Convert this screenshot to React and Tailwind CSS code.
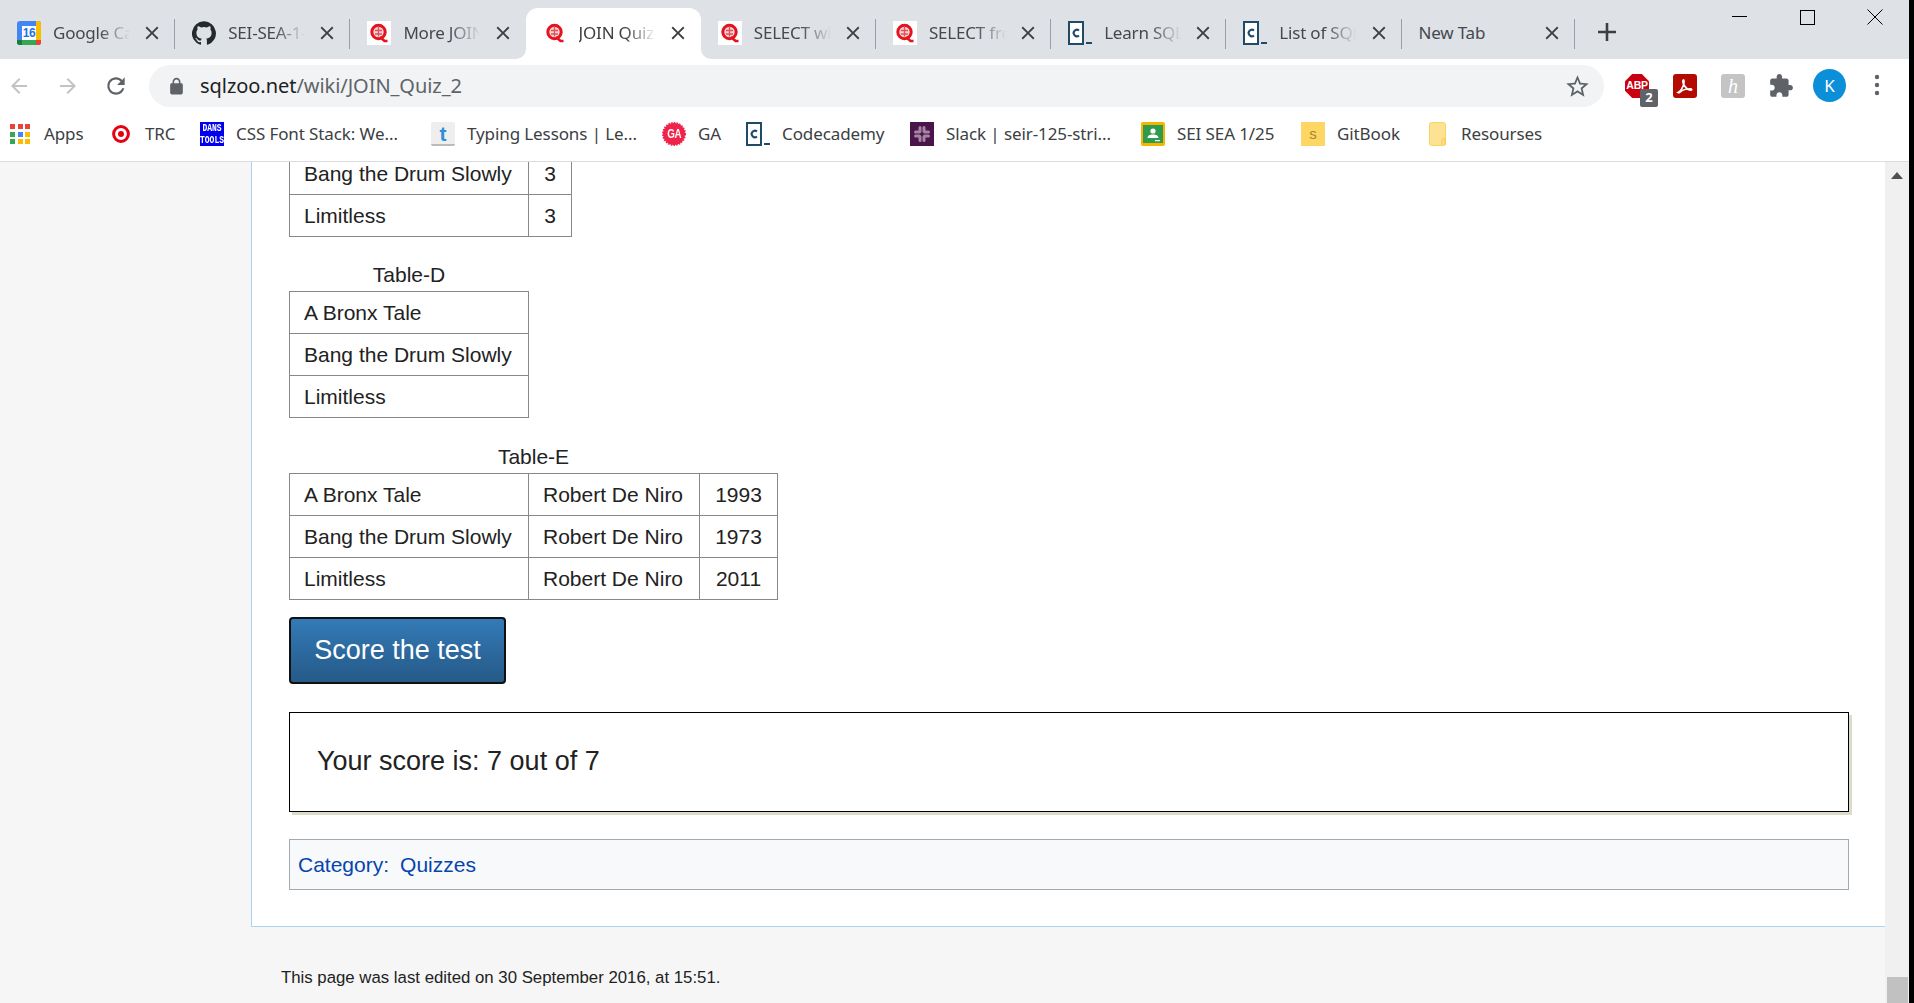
import React from "react";

const M = {
  close: "M19 6.41L17.59 5 12 10.59 6.41 5 5 6.41 10.59 12 5 17.59 6.41 19 12 13.41 17.59 19 19 17.59 13.41 12z",
  back: "M20 11H7.83l5.59-5.59L12 4l-8 8 8 8 1.41-1.41L7.83 13H20v-2z",
  forward: "M4 11h12.17l-5.59-5.59L12 4l8 8-8 8-1.41-1.41L16.17 13H4v-2z",
  reload: "M17.65 6.35C16.2 4.9 14.21 4 12 4c-4.42 0-7.99 3.58-7.99 8s3.57 8 7.99 8c3.73 0 6.84-2.55 7.73-6h-2.08c-.82 2.33-3.04 4-5.65 4-3.31 0-6-2.69-6-6s2.69-6 6-6c1.66 0 3.14.69 4.22 1.78L13 11h7V4l-2.35 2.35z",
  star: "M22 9.24l-7.19-.62L12 2 9.19 8.63 2 9.24l5.46 4.73L5.82 21 12 17.27 18.18 21l-1.63-7.03L22 9.24zM12 15.4l-3.76 2.27 1-4.28-3.32-2.88 4.38-.38L12 6.1l1.71 4.04 4.38.38-3.32 2.88 1 4.28L12 15.4z",
  lock: "M18 8h-1V6c0-2.76-2.24-5-5-5S7 3.24 7 6v2H6c-1.1 0-2 .9-2 2v10c0 1.1.9 2 2 2h12c1.1 0 2-.9 2-2V10c0-1.1-.9-2-2-2zM9 6c0-1.66 1.34-3 3-3s3 1.34 3 3v2H9V6z",
  puzzle: "M20.5 11H19V7c0-1.1-.9-2-2-2h-4V3.5C13 2.12 11.88 1 10.5 1S8 2.12 8 3.5V5H4c-1.1 0-1.99.9-1.99 2v3.8H3.5c1.49 0 2.7 1.21 2.7 2.7s-1.21 2.7-2.7 2.7H2V20c0 1.1.9 2 2 2h3.8v-1.5c0-1.49 1.21-2.7 2.7-2.7 1.49 0 2.7 1.21 2.7 2.7V22H17c1.1 0 2-.9 2-2v-4h1.5c1.38 0 2.5-1.12 2.5-2.5S21.88 11 20.5 11z",
  github: "M12 .3a12 12 0 0 0-3.8 23.4c.6.1.8-.3.8-.6v-2c-3.3.7-4-1.6-4-1.6-.5-1.4-1.3-1.8-1.3-1.8-1.1-.7.1-.7.1-.7 1.2.1 1.8 1.2 1.8 1.2 1.1 1.8 2.8 1.3 3.5 1 .1-.8.4-1.3.8-1.6-2.7-.3-5.5-1.3-5.5-5.9 0-1.3.5-2.4 1.2-3.2-.1-.3-.5-1.5.1-3.2 0 0 1-.3 3.3 1.2a11.5 11.5 0 0 1 6 0c2.3-1.5 3.3-1.2 3.3-1.2.7 1.7.2 2.9.1 3.2.8.8 1.2 1.9 1.2 3.2 0 4.6-2.8 5.6-5.5 5.9.4.4.8 1.1.8 2.2v3.3c0 .3.2.7.8.6A12 12 0 0 0 12 .3z",
};

const Mat = ({ d, size = 24, cls = "" }) => (
  <svg width={size} height={size} viewBox="0 0 24 24" className={cls} fill="currentColor">
    <path d={d} />
  </svg>
);

const GCal = () => (
  <div className="relative w-6 h-6 rounded-[3px] bg-[#4285f4] overflow-hidden shrink-0">
    <div className="absolute right-0 top-0 bottom-0 w-[5px] bg-[#fbbc04]" />
    <div className="absolute left-0 right-0 bottom-0 h-[5px] bg-[#34a853]" />
    <div className="absolute left-0 bottom-0 w-[5px] h-[5px] bg-[#188038]" />
    <div className="absolute right-0 bottom-0 w-[5px] h-[5px] bg-[#ea4335]" />
    <div className="absolute left-[5px] top-[5px] w-[14px] h-[14px] bg-white flex items-center justify-center text-[#1a73e8] text-[12px] font-bold tracking-[-0.5px] font-['Liberation_Sans',sans-serif]">16</div>
  </div>
);

const Zoo = ({ bg = true }) => (
  <div className={`w-6 h-6 flex items-center justify-center shrink-0 ${bg ? "bg-white" : ""}`}>
    <svg width="20" height="20" viewBox="0 0 20 20" fill="none">
      <circle cx="9.5" cy="9" r="6.7" fill="#f7d5d7" stroke="#e3131f" strokeWidth="3" />
      <path d="M9.5 3.5v10M6 7.5h7M6 11h7" stroke="#e2525a" strokeWidth="1.3" />
      <path d="M11 14l4.5 4h3" stroke="#e3131f" strokeWidth="2.6" />
    </svg>
  </div>
);

const Cc = () => (
  <svg width="24" height="24" viewBox="0 0 24 24" className="shrink-0">
    <rect x="1" y="1" width="14" height="22" fill="#fff" stroke="#204b66" strokeWidth="2" />
    <path d="M11 9.6a3.2 3.2 0 1 0 0 4.8" fill="none" stroke="#204b66" strokeWidth="2" />
    <rect x="18" y="21" width="6" height="2" fill="#204b66" />
  </svg>
);

const Ghub = () => <Mat d={M.github} size={24} cls="text-[#24292e] shrink-0" />;

const tabs = [
  { t: "Google Ca", i: <GCal />, sep: true },
  { t: "SEI-SEA-1-", i: <Ghub />, sep: true },
  { t: "More JOIN", i: <Zoo />, sep: false },
  { t: "JOIN Quiz", i: <Zoo bg={false} />, active: true, sep: false },
  { t: "SELECT wi", i: <Zoo />, sep: true },
  { t: "SELECT fro", i: <Zoo />, sep: true },
  { t: "Learn SQL", i: <Cc />, sep: true },
  { t: "List of SQL", i: <Cc />, sep: true },
  { t: "New Tab", i: null, sep: true },
];

const Tab = ({ tab }) => (
  <div className={`relative h-[51px] shrink-0 flex items-center pl-[17px] pb-[1px] ${tab.i ? "w-[175.2px]" : "w-[173px]"} ${tab.active ? "bg-white rounded-t-[12px]" : ""}`}>
    {tab.active && (
      <>
        <div className="absolute -left-[10px] bottom-0 w-[10px] h-[10px] bg-white">
          <div className="w-full h-full bg-[#dee1e6] rounded-br-[10px]" />
        </div>
        <div className="absolute -right-[10px] bottom-0 w-[10px] h-[10px] bg-white">
          <div className="w-full h-full bg-[#dee1e6] rounded-bl-[10px]" />
        </div>
      </>
    )}
    {tab.i}
    <div className={`overflow-hidden whitespace-nowrap text-[17px] tracking-[-0.2px] ${tab.i ? "ml-3 w-[84px] [mask-image:linear-gradient(to_right,black_55%,transparent_92%)]" : "ml-0 w-[104px]"} ${tab.active ? "text-[#3c4043]" : "text-[#45484d]"}`}>
      {tab.t}
    </div>
    <Mat d={M.close} size={22} cls="absolute right-[12px] top-[14px] text-[#3c4043]" />
    {tab.sep && <div className="absolute right-0 top-[11px] h-[30px] w-[1px] bg-[#9aa0a6]" />}
  </div>
);

const Apps = () => {
  const c = ["#ea4335", "#ea4335", "#ea4335", "#34a853", "#4285f4", "#fbbc04", "#34a853", "#fbbc04", "#fbbc04"];
  return (
    <div className="grid grid-cols-3 gap-[2.5px] w-5 shrink-0">
      {c.map((x, i) => (
        <svg key={i} width="5" height="5" viewBox="0 0 5 5"><rect width="5" height="5" fill={x} /></svg>
      ))}
    </div>
  );
};

const Trc = () => (
  <svg width="18" height="18" viewBox="0 0 18 18" className="shrink-0">
    <circle cx="9" cy="9" r="7.4" fill="none" stroke="#e60012" strokeWidth="3" />
    <circle cx="9" cy="9" r="3" fill="#e60012" />
  </svg>
);

const Dans = () => (
  <div className="w-6 h-6 bg-[#0000ee] flex flex-col items-center justify-center text-white text-[8px] leading-[12px] font-bold font-['Liberation_Mono',monospace] shrink-0">
    <span className="scale-y-[1.4]">DANS</span>
    <span className="scale-y-[1.4]">TOOLS</span>
  </div>
);

const Tum = () => (
  <div className="w-6 h-6 bg-[#eeeeee] border-b-2 border-[#bbbbbb] rounded-[2px] flex items-center justify-center text-[#2f8fd8] font-bold text-[21px] leading-none font-['Liberation_Sans',sans-serif] shrink-0">t</div>
);

const Ga = () => (
  <div className="relative w-6 h-6 flex items-center justify-center text-white text-[13px] font-bold font-['Liberation_Sans',sans-serif] shrink-0">
    <svg width="24" height="24" viewBox="0 0 24 24" className="absolute inset-0">
      <circle cx="12" cy="12" r="11" fill="#f0234b" stroke="#f0234b" strokeWidth="2" strokeDasharray="1.5 1.2" />
    </svg>
    <span className="relative scale-x-75 tracking-[-0.5px]">GA</span>
  </div>
);

const Slack = () => (
  <div className="w-6 h-6 bg-[#4a154b] flex items-center justify-center shrink-0">
    <svg width="18" height="18" viewBox="0 0 18 18" fill="none" stroke="#a5859f" strokeWidth="3" strokeLinecap="round">
      <path d="M7 2.5v4M2.5 7h4M15.5 7h-4M11 2.5v4M11 15.5v-4M15.5 11h-4M7 15.5v-4M2.5 11h4" />
    </svg>
  </div>
);

const Classroom = () => (
  <div className="w-6 h-6 bg-[#f7b500] rounded-[2px] flex items-center justify-center shrink-0">
    <svg width="20" height="18" viewBox="0 0 20 18">
      <rect width="20" height="18" fill="#2e9b4f" />
      <circle cx="10" cy="6" r="2.6" fill="#fff" />
      <path d="M4.5 13c0-2.6 2.6-3.6 5.5-3.6s5.5 1 5.5 3.6zM12 15h5v1.2h-5z" fill="#fff" />
    </svg>
  </div>
);

const Gitbook = () => (
  <div className="w-6 h-6 bg-[#fdd663] flex items-center justify-center text-[#a8862b] text-[15px] font-['Liberation_Sans',sans-serif] shrink-0">s</div>
);

const Folder = () => (
  <svg width="17" height="24" viewBox="0 0 17 24" className="shrink-0">
    <rect x="0.5" y="0.5" width="16" height="23" rx="2" fill="#fde293" stroke="#fad45c" />
    <path d="M13 23v-5a1.5 1.5 0 0 1 3 0v5" fill="none" stroke="#f5c842" />
  </svg>
);

const marks = [
  { i: <Apps />, t: "Apps", w: "w-[102px]", g: "ml-[14px]" },
  { i: <Trc />, t: "TRC", w: "w-[88px]", g: "ml-[15px]" },
  { i: <Dans />, t: "CSS Font Stack: We...", w: "w-[231px]", g: "ml-3" },
  { i: <Tum />, t: "Typing Lessons | Le...", w: "w-[231px]", g: "ml-3" },
  { i: <Ga />, t: "GA", w: "w-[84px]", g: "ml-3" },
  { i: <Cc />, t: "Codecademy", w: "w-[164px]", g: "ml-3" },
  { i: <Slack />, t: "Slack | seir-125-stri...", w: "w-[231px]", g: "ml-3" },
  { i: <Classroom />, t: "SEI SEA 1/25", w: "w-[160px]", g: "ml-3" },
  { i: <Gitbook />, t: "GitBook", w: "w-[128px]", g: "ml-3" },
  { i: <Folder />, t: "Resourses", w: "w-[140px]", g: "ml-[15px]" },
];

const cell = "border border-[#888888] h-[42px] px-[14px] whitespace-nowrap";

const DataTable = ({ caption, rows, cols }) => (
  <table className="border-collapse table-fixed text-[21px] text-[#222222]">
    {caption && <caption className="leading-[26px] pb-[3px]">{caption}</caption>}
    <colgroup>
      {cols.map((c, i) => (
        <col key={i} className={c} />
      ))}
    </colgroup>
    <tbody>
      {rows.map((r, i) => (
        <tr key={i}>
          {r.map((v, j) => (
            <td key={j} className={`${cell} ${j === 0 || (j === 1 && r.length === 3) ? "text-left" : "text-center"}`}>{v}</td>
          ))}
        </tr>
      ))}
    </tbody>
  </table>
);

export default function App() {
  return (
    <div className="w-[1914px] h-[1003px] overflow-hidden bg-black flex font-['Noto_Sans',sans-serif]">
      <div className="w-[1909px] h-full flex flex-col">
        {/* tab strip */}
        <div className="h-[59px] bg-[#dee1e6] flex shrink-0">
          <div className="pt-2 flex">
            {tabs.map((t, i) => (
              <Tab key={i} tab={t} />
            ))}
            <div className="w-[65px] h-[51px] flex items-center justify-center pb-1 text-[#3c4043]">
              <svg width="18" height="18" viewBox="0 0 18 18"><path d="M9 0v18M0 9h18" stroke="currentColor" strokeWidth="2.6" /></svg>
            </div>
          </div>
          <div className="ml-auto flex h-[34px] text-black">
            <div className="w-[68px] flex items-center justify-center">
              <svg width="15" height="15" viewBox="0 0 15 15"><path d="M0 6.5h15" stroke="currentColor" strokeWidth="1" /></svg>
            </div>
            <div className="w-[68px] flex items-center justify-center">
              <svg width="15" height="15" viewBox="0 0 15 15"><rect x="0.5" y="0.5" width="14" height="14" fill="none" stroke="currentColor" /></svg>
            </div>
            <div className="w-[68px] flex items-center justify-center">
              <svg width="16" height="16" viewBox="0 0 16 16"><path d="M.5.5l15 15M15.5.5l-15 15" stroke="currentColor" /></svg>
            </div>
          </div>
        </div>

        {/* address row */}
        <div className="h-[53px] bg-white flex pt-[6px] shrink-0">
          <div className="w-[149px] h-[42px] flex items-center pl-[7px]">
            <Mat d={M.back} size={24} cls="text-[#c1c3c6]" />
            <Mat d={M.forward} size={24} cls="ml-[25px] text-[#c1c3c6]" />
            <Mat d={M.reload} size={26} cls="ml-[23px] text-[#5f6368]" />
          </div>
          <div className="w-[1455px] h-[42px] rounded-full bg-[#f1f3f4] flex items-center pl-[18px] pr-[13px]">
            <Mat d={M.lock} size={19} cls="text-[#5f6368]" />
            <div className="ml-[14px] text-[20px] tracking-[-0.05px] text-[#5f6368]">
              <span className="text-[#202124]">sqlzoo.net</span>/wiki/JOIN_Quiz_2
            </div>
            <Mat d={M.star} size={27} cls="ml-auto text-[#5f6368]" />
          </div>
          <div className="relative flex items-start flex-1 h-[42px] pl-[21px] pt-[3px] mt-[6px]">
            <div className="relative w-6 h-6 bg-[#c8000f] [clip-path:polygon(30%_0,70%_0,100%_30%,100%_70%,70%_100%,30%_100%,0_70%,0_30%)] flex items-center justify-center text-white text-[10.5px] font-bold font-['Liberation_Sans',sans-serif] tracking-[-0.3px]">ABP</div>
            <div className="absolute left-[36px] top-[18px] w-[18px] h-[18px] rounded-[2px] bg-[#5f6368] flex items-center justify-center text-white text-[13px] font-bold">2</div>
            <div className="ml-6 w-6 h-6 rounded-[3px] bg-[#b30b00] flex items-center justify-center">
              <svg width="18" height="18" viewBox="0 0 18 18" fill="none" stroke="#fff" strokeWidth="1.6">
                <path d="M2 15.5c3-1.5 5-5.5 6-9.5.4-2-.2-3.5-.8-3-.7.6-.2 3.5 1.8 6.5 1.6 2.3 3.8 3.7 6 3.7 1.2 0 1-1.4-.7-1.4-3 0-7.5 1-10.5 3.5-.8.6-1.4.4-1.8.2z" />
              </svg>
            </div>
            <div className="ml-6 w-6 h-6 rounded-[3px] bg-[#c4c4c4] flex items-center justify-center text-white text-[20px] italic leading-none font-['Liberation_Serif',serif]">h</div>
            <Mat d={M.puzzle} size={26} cls="ml-[23px] -mt-[1px] text-[#5f6368]" />
            <div className="ml-[19px] -mt-[5px] w-[33px] h-[33px] rounded-full bg-[#0b8fd9] flex items-center justify-center text-white text-[17px]">K</div>
            <svg width="6" height="22" viewBox="0 0 6 22" className="ml-[28px] text-[#5f6368]" fill="currentColor">
              <circle cx="3" cy="3" r="2.2" /><circle cx="3" cy="11" r="2.2" /><circle cx="3" cy="19" r="2.2" />
            </svg>
          </div>
        </div>

        {/* bookmarks */}
        <div className="h-[50px] bg-white border-b border-[#dadce0] flex items-center pb-[5px] pl-[10px] shrink-0">
          {marks.map((m, i) => (
            <div key={i} className={`${m.w} flex items-center shrink-0`}>
              {m.i}
              <span className={`${m.g} whitespace-nowrap text-[17px] tracking-[-0.1px] text-[#3c4043]`}>{m.t}</span>
            </div>
          ))}
        </div>

        {/* viewport */}
        <div className="flex-1 flex min-h-0">
          <div className="flex-1 bg-[#f6f6f6] overflow-hidden font-['Liberation_Sans',Arial,sans-serif]">
            <div className="ml-[251px] -mt-[10px] bg-white border-l border-b border-[#aed3f0] pl-[37px] pr-[36px] pb-[36px] flex flex-col items-start">
              <DataTable
                cols={["w-[239px]", "w-[43px]"]}
                rows={[["Bang the Drum Slowly", "3"], ["Limitless", "3"]]}
              />
              <div className="mt-[25px]">
                <DataTable
                  caption="Table-D"
                  cols={["w-[239px]"]}
                  rows={[["A Bronx Tale"], ["Bang the Drum Slowly"], ["Limitless"]]}
                />
              </div>
              <div className="mt-[26px]">
                <DataTable
                  caption="Table-E"
                  cols={["w-[239px]", "w-[171px]", "w-[78px]"]}
                  rows={[
                    ["A Bronx Tale", "Robert De Niro", "1993"],
                    ["Bang the Drum Slowly", "Robert De Niro", "1973"],
                    ["Limitless", "Robert De Niro", "2011"],
                  ]}
                />
              </div>
              <button className="mt-[17px] w-[217px] h-[67px] rounded-[4px] border-2 border-[#111111] bg-gradient-to-b from-[#337ab7] to-[#265a88] text-white text-[27px]">
                Score the test
              </button>
              <div className="mt-[28px] w-full h-[100px] border border-black shadow-[3px_3px_0_#dcdcc8] flex items-center pl-[27px] pb-[2px] text-[27px] text-[#222222]">
                Your score is: 7 out of 7
              </div>
              <div className="mt-[27px] w-full h-[51px] border border-[#a2a9b1] bg-[#f8f9fa] flex items-center pl-2 text-[21px] text-[#0645ad]">
                <span>Category:</span>
                <span className="ml-[11px]">Quizzes</span>
              </div>
            </div>
            <div className="pl-[281px] pt-[41px] text-[16.8px] leading-5 text-[#222222]">
              This page was last edited on 30 September 2016, at 15:51.
            </div>
          </div>
          <div className="w-6 bg-[#f0f0f0] flex flex-col justify-between items-center">
            <svg width="14" height="8" viewBox="0 0 14 8" className="mt-[10px]"><path d="M7 0l6 7H1z" fill="#505050" /></svg>
            <div className="w-[21px] h-[26px] bg-[#c1c1c1]" />
          </div>
        </div>
      </div>
    </div>
  );
}
